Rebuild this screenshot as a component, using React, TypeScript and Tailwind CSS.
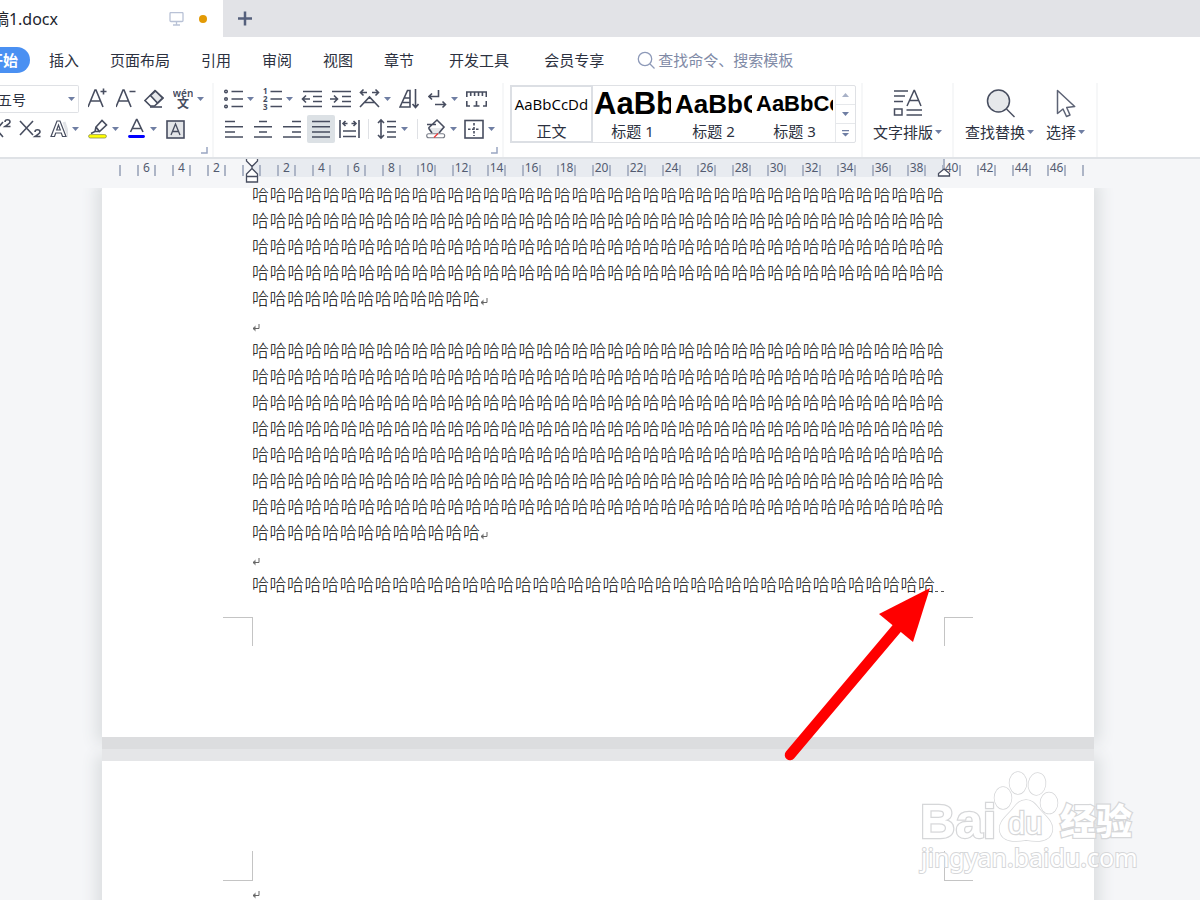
import { ReactNode } from "react";
import clsx from "clsx";

const INK = "#474d5f";

/* ---------- small pieces ---------- */

function Caret() {
  return (
    <svg className="w-[7px] h-1 shrink-0" viewBox="0 0 7 4">
      <path d="M0 0h7L3.500 4z" fill="#6f7ea3" />
    </svg>
  );
}

type IconProps = {
  w?: number;
  children: ReactNode;
};

function Icon({ w = 20, children }: IconProps) {
  return (
    <svg
      width={w}
      height={24}
      viewBox={`0 0 ${w} 24`}
      fill="none"
      stroke={INK}
      strokeWidth={1.6}
      className="shrink-0"
    >
      {children}
    </svg>
  );
}

type ToolProps = {
  label: string;
  className?: string;
  caret?: boolean;
  children: ReactNode;
};

function Tool({ label, className, caret, children }: ToolProps) {
  return (
    <button
      type="button"
      aria-label={label}
      title={label}
      className={clsx("flex h-7 shrink-0 items-center gap-1 rounded-xs", className)}
    >
      {children}
      {caret && <Caret />}
    </button>
  );
}

function Launcher({ label }: { label: string }) {
  return (
    <button type="button" aria-label={label} className="mt-1 mr-1 self-end">
      <svg width="7" height="7" viewBox="0 0 7 7" fill="none" stroke="#9aa6c2" strokeWidth="1.500">
        <path d="M6 0v6H0" />
      </svg>
    </button>
  );
}

function ReturnMark() {
  return (
    <svg width="8" height="8" viewBox="0 0 8 8" fill="none" stroke="#666" className="mt-1.5 shrink-0">
      <path d="M7 0v4.500H1M3.500 2.200L1 4.500l2.500 2.300" />
      <path d="M3.500 2.500v4L1 4.500z" fill="#666" stroke="none" />
    </svg>
  );
}

/* ---------- header ---------- */

function TabBar() {
  return (
    <div className="flex h-[37px] bg-[#e2e3e7]">
      <div className="flex w-[223px] items-center bg-white">
        <div className="flex w-[58px] justify-end overflow-hidden text-base whitespace-nowrap text-[#22252e]">
          稿1.docx
        </div>
        <svg width="16" height="14" viewBox="0 0 16 14" fill="none" stroke="#b9c2d6" className="ml-[111px]">
          <rect x="1" y=".5" width="13" height="9" rx="1" strokeWidth="1.300" />
          <path d="M7.500 10v3M4 13h7" strokeWidth="1.300" />
        </svg>
        <span className="ml-3.5 size-2 rounded-full bg-[#e39a05]" />
      </div>
      <button type="button" aria-label="新建" className="ml-3.5 self-center">
        <svg width="16" height="16" viewBox="0 0 16 16" stroke="#55607c" strokeWidth="2.500">
          <path d="M8 .5v14M1 7.500h14" />
        </svg>
      </button>
    </div>
  );
}

const MENU = ["插入", "页面布局", "引用", "审阅", "视图", "章节"];
const MENU_EXTRA = ["开发工具", "会员专享"];

function MenuBar() {
  return (
    <nav className="-ml-6 flex h-[46px] items-center text-[15px] whitespace-nowrap text-[#2c3140]">
      <button type="button" className="h-[26px] rounded-full bg-[#4a90f2] px-3 font-bold text-white">
        开始
      </button>
      <div className="ml-[19px] flex gap-[31px]">
        {MENU.map((item) => (
          <button type="button" key={item}>
            {item}
          </button>
        ))}
      </div>
      <div className="ml-[35px] flex gap-[35px]">
        {MENU_EXTRA.map((item) => (
          <button type="button" key={item}>
            {item}
          </button>
        ))}
      </div>
      <label className="ml-[33px] flex items-center gap-0.5">
        <svg width="19" height="19" viewBox="0 0 19 19" fill="none" stroke="#8d99b8" strokeWidth="1.300">
          <circle cx="8" cy="8" r="6.700" />
          <path d="M13 13l4.500 4.500" />
        </svg>
        <input
          type="text"
          aria-label="查找命令"
          placeholder="查找命令、搜索模板"
          className="w-40 outline-none placeholder:text-[#7f8aa6]"
        />
      </label>
    </nav>
  );
}

/* ---------- ribbon ---------- */

function FontGroup() {
  return (
    <div className="flex w-[214px] shrink-0 flex-col border-r-2 border-[#f6f7f8] pt-0.5">
      <div className="flex items-center">
        <div className="relative">
          <select
            aria-label="字号"
            defaultValue="五号"
            className="-ml-0.5 h-7 w-[81px] appearance-none rounded-r-xs border border-l-0 border-[#dfe1e5] bg-white text-[14px] text-[#2c3140]"
          >
            <option>五号</option>
            <option>四号</option>
          </select>
          <span className="pointer-events-none absolute top-3 right-1 flex">
            <Caret />
          </span>
        </div>
        <Tool label="增大字号" className="ml-[9px]">
          <Icon>
            <path d="M0 20L7 3h1l7 17M2.500 14h10M12.500 4.500h6M15.500 1.500v6" />
          </Icon>
        </Tool>
        <Tool label="减小字号" className="ml-2">
          <Icon>
            <path d="M0 20L7 3h1l7 17M2.500 14h10M13.500 4.500h6" />
          </Icon>
        </Tool>
        <Tool label="清除格式" className="ml-2">
          <Icon>
            <path d="M1 13.500L11 3.500l8 7.500-8.500 8H6.500z" />
            <path d="M6.500 8.500l5-4.500 7 7-5 5z" fill="#e6e8eb" />
            <path d="M6 20h12" />
          </Icon>
        </Tool>
        <Tool label="拼音指南" className="ml-[9px]" caret>
          <Icon>
            <g fill={INK} stroke="none" fontFamily="Noto Sans, Noto Sans CJK SC, sans-serif" textAnchor="middle">
              <text x="10" y="10" fontSize="10" fontWeight="600">
                wén
              </text>
              <text x="10" y="21" fontSize="12" fontWeight="700">
                文
              </text>
            </g>
          </Icon>
        </Tool>
      </div>
      <div className="mt-0.5 flex items-center">
        <Tool label="上标" className="w-[11px] justify-end overflow-hidden">
          <Icon w={22}>
            <path d="M1 5l13 15M14 5L1 20M16 5c0-3 5-3 5 0 0 1.500-3 3-5 4.500h5.500" />
          </Icon>
        </Tool>
        <Tool label="下标" className="ml-2">
          <Icon w={22}>
            <path d="M1 4l13 14M14 4L1 18M16 15c0-3 5-3 5 0 0 1.500-3 3-5 4.500h5.500" />
          </Icon>
        </Tool>
        <Tool label="文字效果" className="ml-[9px]" caret>
          <Icon w={18}>
            <path d="M14 5l5 15" stroke="#e1e3e7" strokeWidth="3" />
            <path
              d="M1 19.500L7 4h3l6 15.500h-3.500L11.300 16H5.700l-1.200 3.500zM6.700 13L8.500 8l1.800 5z"
              fill="#fff"
              strokeWidth="1.200"
            />
          </Icon>
        </Tool>
        <Tool label="突出显示" className="ml-[9px]" caret>
          <Icon>
            <path d="M8 10l6-6.500 4.500 4.500-7 6.500zM8 10l-1 4.500-4 2M11.500 14.500L7 14.500" />
            <rect x=".6" y="17.600" width="17.800" height="3.400" rx="1.700" fill="#ffff00" stroke="#8b8d55" strokeWidth=".8" />
          </Icon>
        </Tool>
        <Tool label="字体颜色" className="ml-[9px]" caret>
          <Icon w={18}>
            <path d="M2.500 15L8.500 2.500h.5l6 12.500M4.500 11.500h8.500" />
            <path d="M1.500 19.500h14" stroke="#0000ff" strokeWidth="2.800" strokeLinecap="round" />
          </Icon>
        </Tool>
        <Tool label="字符底纹" className="ml-[9px]">
          <Icon>
            <rect x="1" y="4" width="17" height="17" fill="#e3e5e8" />
            <path d="M5 18l4.500-11 4.500 11M6.500 14.500h6" strokeWidth="1.300" />
          </Icon>
        </Tool>
      </div>
      <Launcher label="字体设置" />
    </div>
  );
}

function ParagraphGroup() {
  return (
    <div className="flex w-[290px] shrink-0 flex-col border-r-2 border-[#f6f7f8] pt-0.5 pl-[9px]">
      <div className="flex items-center">
        <Tool label="项目符号" caret>
          <Icon w={20}>
            <g strokeWidth="1.500">
              <circle cx="3" cy="4.500" r="1.300" />
              <circle cx="3" cy="12" r="1.300" />
              <circle cx="3" cy="19.500" r="1.300" />
            </g>
            <path d="M8.500 4.500H20M8.500 12H20M8.500 19.500H20" />
          </Icon>
        </Tool>
        <Tool label="编号" className="ml-2" caret>
          <Icon>
            <g fill={INK} stroke="none" fontFamily="Noto Sans, sans-serif" fontSize="8" fontWeight="700">
              <text x="1" y="7">
                1
              </text>
              <text x="1" y="15">
                2
              </text>
              <text x="1" y="23">
                3
              </text>
            </g>
            <path d="M8.500 4.500H20M8.500 12H20M8.500 19.500H20" />
          </Icon>
        </Tool>
        <Tool label="减少缩进" className="ml-2">
          <Icon w={21}>
            <path d="M2 4.500h19M12 9.500h9M12 14.500h9M2 19.500h19M1.500 12H9M5 8.500L1.500 12 5 15.500" />
          </Icon>
        </Tool>
        <Tool label="增加缩进" className="ml-2">
          <Icon w={21}>
            <path d="M2 4.500h19M12 9.500h9M12 14.500h9M2 19.500h19M0 12h7.500M4 8.500L7.500 12 4 15.500" />
          </Icon>
        </Tool>
        <Tool label="中文版式" className="ml-2" caret>
          <Icon w={21}>
            <path d="M1 20L10.500 10 20 20M5.500 15.500h10M1.500 5.500H8M4.500 2.500l-3 3 3 3M13 5.500h6.500M16.500 2.500l3 3-3 3" />
          </Icon>
        </Tool>
        <Tool label="排序" className="ml-2">
          <Icon>
            <path d="M1 20L8.500 3.500H11V20zM5.500 11H11M4 15.500h7M16.500 2v18M13.500 17l3 3.500 3-3.500" />
          </Icon>
        </Tool>
        <Tool label="制表位" className="ml-[9px]" caret>
          <Icon w={19}>
            <path d="M10.500 3v6.500H1M4 6.500l-3 3 3 3M7 17.500h10.500M14.500 14.500l3 3-3 3" />
          </Icon>
        </Tool>
        <Tool label="标尺" className="ml-2">
          <Icon w={21}>
            <path d="M.8 10V5h19.500v5M4.700 5v4M8.600 5v4M12.500 5v4M16.400 5v4M.8 14v5H4M20.300 14v5H17M10.500 14v5M7.500 19h6" />
          </Icon>
        </Tool>
      </div>
      <div className="mt-0.5 flex items-center pl-px">
        <Tool label="左对齐">
          <Icon>
            <path d="M1 4.500h10M1 9.800h18M1 15h10M1 20h18" />
          </Icon>
        </Tool>
        <Tool label="居中对齐" className="ml-2.5">
          <Icon w={18}>
            <path d="M5 4.500h8M0 9.800h18M5 15h8M0 20h18" />
          </Icon>
        </Tool>
        <Tool label="右对齐" className="ml-[11px]">
          <Icon w={18}>
            <path d="M9 4.500h9M0 9.800h18M9 15h9M0 20h18" />
          </Icon>
        </Tool>
        <Tool label="两端对齐" className="ml-1.5 w-7 justify-center bg-[#dce1e5]">
          <Icon w={18}>
            <path d="M0 4.500h18M0 9.800h18M0 15h18M0 20h18" />
          </Icon>
        </Tool>
        <Tool label="分散对齐" className="ml-1">
          <Icon w={21}>
            <path d="M1 3v18M20 3v18M4 14h13M4 19.500h13M4 6.500h4.500M6.500 4L4 6.500 6.500 9M12.500 6.500H17M14.500 4L17 6.500 14.500 9" />
          </Icon>
        </Tool>
        <span className="ml-2 h-5 w-px bg-[#dfe1e5]" />
        <Tool label="行距" className="ml-2" caret>
          <Icon w={20}>
            <path d="M4 3v18M1 6l3-3 3 3M1 18l3 3 3-3M10 4.500h9M10 9.800h9M10 15h9M10 20h9" />
          </Icon>
        </Tool>
        <span className="ml-[9px] h-5 w-px bg-[#dfe1e5]" />
        <Tool label="底纹颜色" className="ml-2" caret>
          <Icon w={20}>
            <path d="M2.500 11h15l-3 5h-8z" fill="#e6e8eb" stroke="none" />
            <path d="M2.500 11l8.500-8 7 7-5 6M2.500 11l3.500 5M1 7.500h9" />
            <rect x=".7" y="16.700" width="18" height="4" rx="2" fill="#fff" stroke="#777b86" strokeWidth="1.100" />
            <path d="M8 20.500l4-4" stroke="#e33" strokeWidth="1.200" />
          </Icon>
        </Tool>
        <Tool label="边框" className="ml-[7px]" caret>
          <Icon w={20}>
            <rect x="1" y="3.500" width="18" height="17.500" />
            <path d="M10 6v13M4 12.300h12" strokeDasharray="2.500 1.500" />
          </Icon>
        </Tool>
      </div>
      <Launcher label="段落设置" />
    </div>
  );
}

function StyleGallery() {
  const name = "text-[15px] leading-[18px] text-[#2c3140]";
  const item = "flex h-full w-[81px] flex-col overflow-hidden px-0.5";
  const sample = "w-full overflow-hidden text-left font-['Liberation_Sans'] leading-9 font-bold text-black";
  return (
    <div className="mt-0.5 ml-1.5 flex h-[58px] shrink-0 self-start rounded-xs border border-[#dfe1e5]">
      <button
        type="button"
        className={clsx(item, "items-center bg-white outline-2 -outline-offset-1 outline-[#dcdfe4]")}
      >
        <span className="font-['Open_Sans'] text-[15px] leading-9 text-black">AaBbCcDd</span>
        <span className={name}>正文</span>
      </button>
      <button type="button" className={item}>
        <span className={clsx(sample, "text-[31px]")}>AaBb</span>
        <span className={clsx(name, "self-center")}>标题 1</span>
      </button>
      <button type="button" className={item}>
        <span className={clsx(sample, "text-[26px]")}>AaBbC</span>
        <span className={clsx(name, "self-center")}>标题 2</span>
      </button>
      <button type="button" className={item}>
        <span className={clsx(sample, "text-[22px]")}>AaBbCc</span>
        <span className={clsx(name, "self-center")}>标题 3</span>
      </button>
      <div className="flex w-5 flex-col divide-y divide-[#e6e8eb] border-l border-[#e6e8eb]">
        <button type="button" aria-label="上一行" className="flex flex-1 items-center justify-center">
          <span className="flex rotate-180 opacity-60">
            <Caret />
          </span>
        </button>
        <button type="button" aria-label="下一行" className="flex flex-1 items-center justify-center">
          <Caret />
        </button>
        <button type="button" aria-label="更多样式" className="flex flex-1 items-center justify-center">
          <svg width="7" height="7" viewBox="0 0 7 7" fill="#6f7ea3">
            <path d="M0 0h7v1.200H0zM0 3h7L3.500 6.500z" />
          </svg>
        </button>
      </div>
    </div>
  );
}

type BigToolProps = {
  text: string;
  children: ReactNode;
};

function BigTool({ text, children }: BigToolProps) {
  return (
    <button type="button" className="flex shrink-0 flex-col items-start text-[15px] text-[#2c3140]">
      <span className="flex h-9 w-full items-center justify-center">{children}</span>
      <span className="flex items-center gap-0.5 leading-[22px] whitespace-nowrap">
        {text}
        <Caret />
      </span>
    </button>
  );
}

function Ribbon() {
  return (
    <div className="flex h-[74px] overflow-hidden">
      <FontGroup />
      <ParagraphGroup />
      <StyleGallery />
      <div className="ml-[5px] flex shrink-0 border-x-2 border-[#f6f7f8] px-2.5 pt-0.5">
        <BigTool text="文字排版">
          <svg width="30" height="28" viewBox="0 0 30 28" fill="none" stroke={INK} strokeWidth="1.500">
            <path d="M1 2h14M1 7h11M1 12.500h9M14 17l7-15.500h.5L28 17M16.500 11.500h9.500M13.500 21h15.500M13.500 26h15.500" />
            <rect x="1.500" y="20" width="7.500" height="6" />
          </svg>
        </BigTool>
      </div>
      <div className="flex shrink-0 gap-3 border-r-2 border-[#f6f7f8] px-[11px] pt-0.5">
        <BigTool text="查找替换">
          <svg width="30" height="29" viewBox="0 0 30 29" fill="none" stroke={INK} strokeWidth="1.500">
            <circle cx="13.500" cy="12" r="11" fill="#e6e8eb" />
            <path d="M21.500 20l8 8" />
          </svg>
        </BigTool>
        <BigTool text="选择">
          <svg width="20" height="29" viewBox="0 0 20 29" fill="#fff" stroke="#5d6375" strokeWidth="1.500" strokeLinejoin="round">
            <path d="M1.500 1.500v23l5.500-4.500 3.500 7.500 3.500-1.500-3.300-7.500 8-1z" />
          </svg>
        </BigTool>
      </div>
    </div>
  );
}

/* ---------- ruler ---------- */

const RULER = ["", "6", "4", "2", "", ...Array.from({ length: 23 }, (_, i) => String((i + 1) * 2)), ""];

function Ruler() {
  return (
    <div className="h-[31px] shrink-0 overflow-hidden border-t-2 border-[#dfe2e6] bg-[#f5f6f8] pr-1">
      <div className="relative mx-auto w-[992px]">
        <div className="ml-[150px] h-[18px] w-[692px] bg-[#e8ebf0]" />
        <div className="absolute top-0 -left-2 flex">
          {RULER.map((n, i) => (
            <span key={i} className="flex w-[35px] shrink-0 justify-center">
              <span
                className={clsx(
                  "mt-1.5 flex h-[11px] w-[19px] items-center justify-center border-[#adb5c6] text-[12px] leading-none text-[#535b70]",
                  i > 0 && "border-l-2",
                  i < RULER.length - 1 && "border-r-2",
                )}
              >
                <span className="pb-1.5">{n}</span>
              </span>
            </span>
          ))}
        </div>
        <svg
          width="14"
          height="29"
          viewBox="0 0 14 29"
          fill="#fff"
          stroke={INK}
          strokeWidth="1.300"
          className="absolute -top-1 left-[143px]"
        >
          <path d="M1.500 3h11v3L7 11.500 1.500 6zM7 11.500v2M7 13.500l5.500 5.500v2.500h-11V19zM1.500 21.500h11V27h-11z" />
        </svg>
        <svg
          width="14"
          height="22"
          viewBox="0 0 14 22"
          fill="#fff"
          stroke={INK}
          strokeWidth="1.300"
          className="absolute -top-0.5 left-[835px]"
        >
          <path d="M7 0v12" stroke="#adb5c6" strokeWidth="2" />
          <path d="M7 12l5.500 4.500V19h-11v-2.500z" />
        </svg>
      </div>
    </div>
  );
}

/* ---------- document ---------- */

const FULL = "哈".repeat(39);
const SHORT = "哈".repeat(13);

function Paragraph({ rows }: { rows: number }) {
  return (
    <div>
      {Array.from({ length: rows }, (_, i) => (
        <p key={i} className="h-[26px] [text-align-last:justify]">
          {FULL}
        </p>
      ))}
      <p className="flex h-[26px] items-center">
        <span className="w-[228px] [text-align-last:justify]">{SHORT}</span>
        <ReturnMark />
      </p>
      <p className="flex h-[26px] items-center">
        <ReturnMark />
      </p>
    </div>
  );
}

function Document() {
  return (
    <main className="min-h-0 flex-1 overflow-hidden bg-[#f5f6f8] pr-1">
      <div className="mx-auto flex w-[992px] flex-col">
        <section className="flex h-[549px] shrink-0 flex-col bg-white shadow-[0_0_14px_6px_#dcdfe1]">
          <article className="-mt-1.5 px-[150px] text-[17px] leading-[26px] font-light whitespace-nowrap text-black">
            <Paragraph rows={4} />
            <Paragraph rows={7} />
            <p className="flex">
              <span className="w-[683px] [text-align-last:justify]">{FULL}</span>
              <span className="mb-1.5 flex-1 self-end border-b border-dashed border-[#555]" />
            </p>
          </article>
          <div className="mt-[19px] flex justify-between px-[121px]">
            <span className="h-[29px] w-[30px] border-t border-r border-[#c4c4c4]" />
            <span className="h-[29px] w-[29px] border-t border-l border-[#c4c4c4]" />
          </div>
        </section>
        <div className="relative h-6 shrink-0 border-b-[12px] border-[#e5e6e8] bg-[#dcdddf]" />
        <section className="min-h-[300px] bg-white pt-[90px] shadow-[0_0_14px_6px_#dcdfe1]">
          <div className="flex justify-between px-[121px]">
            <span className="h-[30px] w-[30px] border-r border-b border-[#c4c4c4]" />
            <span className="h-[30px] w-[29px] border-b border-l border-[#c4c4c4]" />
          </div>
          <p className="px-[150px] pt-1">
            <ReturnMark />
          </p>
        </section>
      </div>
    </main>
  );
}

/* ---------- things lying over the page ---------- */

function Arrow() {
  return (
    <svg width="160" height="180" viewBox="0 0 160 180" className="pointer-events-none absolute top-[584px] left-[780px] z-20">
      <path d="M10 171L118 43" stroke="#f00" strokeWidth="10.500" strokeLinecap="round" />
      <path d="M150 4L99 30l34 28z" fill="#f00" />
    </svg>
  );
}

function Watermark() {
  return (
    <svg
      width="230"
      height="120"
      viewBox="0 0 230 120"
      fill="#fff"
      stroke="#d6d7d9"
      strokeWidth="1.500"
      paintOrder="stroke"
      className="pointer-events-none absolute right-[54px] bottom-[14px] z-20"
    >
      <g fontFamily="Liberation Sans, Noto Sans CJK SC, sans-serif" fontWeight="700">
        <text x="4" y="72" fontSize="49" strokeWidth="2.500">
          Bai
        </text>
        <g strokeWidth="1.500">
          <ellipse cx="87" cy="32" rx="8.500" ry="11" />
          <ellipse cx="102" cy="17" rx="8.500" ry="11" />
          <ellipse cx="121" cy="18" rx="8.500" ry="11" transform="rotate(10 121 18)" />
          <ellipse cx="133" cy="37" rx="8.500" ry="10.500" />
          <path d="M110 34c8 0 11 7 16 12 6 6 12 12 10 20-3 10-14 10-26 8-12 2-23 2-26-8-2-8 4-14 10-20 5-5 8-12 16-12z" />
        </g>
        <text x="92" y="68" fontSize="31" strokeWidth="2.500" fontWeight="400">
          du
        </text>
        <text x="144" y="69" fontSize="36" fontWeight="900" strokeWidth="2.500">
          经验
        </text>
      </g>
      <text x="5" y="101" fontSize="25" strokeWidth="2" fontFamily="Noto Sans, sans-serif">
        jingyan.baidu.com
      </text>
    </svg>
  );
}

export default function App() {
  return (
    <div className="relative flex h-screen flex-col overflow-hidden bg-white font-['Noto_Sans','Noto_Sans_CJK_SC',sans-serif]">
      <header className="shrink-0 overflow-hidden">
        <TabBar />
        <MenuBar />
        <Ribbon />
      </header>
      <Ruler />
      <Document />
      <Arrow />
      <Watermark />
    </div>
  );
}
